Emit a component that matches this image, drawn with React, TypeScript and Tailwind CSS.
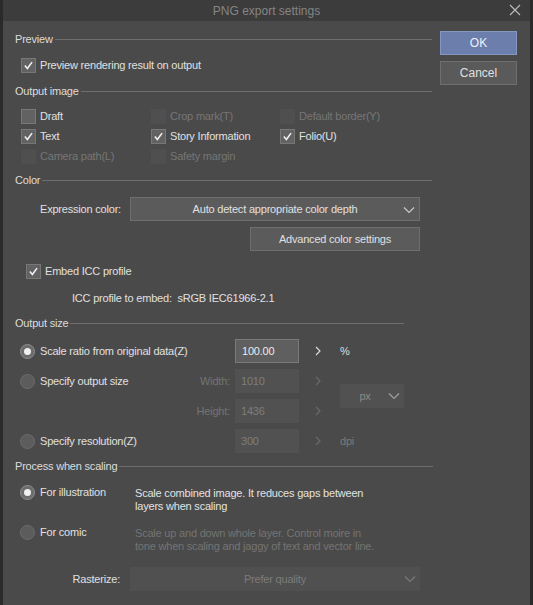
import type { ReactNode } from "react";

const font = { fontFamily: '"Liberation Sans", Arial, sans-serif' };

const Check = () => (
  <svg viewBox="0 0 15 15" className="h-[15px] w-[15px]">
    <path d="M3.3 7.6 L6.2 10.9 L11.6 3.6" fill="none" stroke="#f2f2f2" strokeWidth="1.8" />
  </svg>
);

const Checkbox = ({ checked, disabled, label }: { checked?: boolean; disabled?: boolean; label: string }) => (
  <div className="flex h-[20px] items-center gap-[4px]">
    <div
      className={`h-[15px] w-[15px] shrink-0 ${
        disabled ? "bg-[#4f4f4f]" : "border border-[#777777] bg-[#626262]"
      } flex items-center justify-center`}
    >
      {checked && <Check />}
    </div>
    <span className={disabled ? "text-[#767676]" : "text-[#e0e0e0]"}>{label}</span>
  </div>
);

const Radio = ({ selected, label }: { selected?: boolean; label: string }) => (
  <div className="flex h-[16px] items-center gap-[5px]">
    <div
      className={`flex h-[15px] w-[15px] shrink-0 items-center justify-center rounded-full border ${
        selected ? "border-[#8e8e8e] bg-[#6c6c6c]" : "border-[#6c6c6c] bg-[#5c5c5c]"
      }`}
    >
      {selected && <div className="h-[7px] w-[7px] rounded-full bg-[#f0f0f0]" />}
    </div>
    <span className="text-[#e0e0e0]">{label}</span>
  </div>
);

const Header = ({ label, lineEnd = 432 }: { label: string; lineEnd?: number }) => (
  <div className="flex h-[16px] items-center" style={{ width: lineEnd - 15 }}>
    <span className="text-[#dcdcdc]">{label}</span>
    <div className="ml-[2px] h-px flex-1 bg-[#6e6e6e]" />
  </div>
);

const ChevronDown = ({ color }: { color: string }) => (
  <svg viewBox="0 0 12 8" className="h-[8px] w-[12px]">
    <path d="M1 1.5 L6 6.5 L11 1.5" fill="none" stroke={color} strokeWidth="1.2" />
  </svg>
);

const ChevronRight = ({ dim }: { dim?: boolean }) => (
  <svg viewBox="0 0 6 10" className="h-[10px] w-[6px]">
    <path d="M1 1 L5 5 L1 9" fill="none" stroke={dim ? "#6a6a6a" : "#d8d8d8"} strokeWidth="1.2" />
  </svg>
);

const Field = ({ value, active }: { value: string; active?: boolean }) => (
  <div
    className={`flex h-[24px] w-[64px] items-center pl-[6px] ${
      active ? "border border-[#7a7a7a] bg-[#5f5f5f] text-[#ececec]" : "bg-[#515151] text-[#7e7e7e]"
    }`}
  >
    {value}
  </div>
);

const Select = ({ text, disabled, children }: { text: string; disabled?: boolean; children?: ReactNode }) => (
  <div
    className={`relative flex h-[24px] w-[290px] items-center justify-center ${
      disabled ? "bg-[#505050] text-[#7c7c7c]" : "border border-[#6e6e6e] bg-[#5b5b5b] text-[#e0e0e0]"
    }`}
  >
    <span>{text}</span>
    <div className="absolute right-[4px] top-[8px]">
      <ChevronDown color={disabled ? "#7a7a7a" : "#c8c8c8"} />
    </div>
    {children}
  </div>
);

export default function App() {
  return (
    <div
      className="h-[605px] w-[533px] overflow-hidden whitespace-nowrap bg-[#2a2a2a] pl-[3px] text-[11px] tracking-[-0.2px]"
      style={font}
    >
      <div className="h-full w-[527px] bg-[#4a4a4a]">
        {/* title bar */}
        <div className="relative flex h-[21px] items-center justify-center bg-[#3c3c3c] text-[12px] tracking-normal text-[#858585]">
          PNG export settings
          <svg viewBox="0 0 12 12" className="absolute right-[9px] top-[4px] h-[12px] w-[12px]">
            <path d="M1 1 L11 11 M11 1 L1 11" stroke="#bdbdbd" strokeWidth="1.1" />
          </svg>
        </div>

        <div className="flex">
          {/* main column */}
          <div className="w-[434px] pl-[12px] pt-[10px]">
            <Header label="Preview" />
            <div className="mt-[8px] pl-[6px]">
              <Checkbox checked label="Preview rendering result on output" />
            </div>

            <div className="mt-[8px]">
              <Header label="Output image" />
            </div>
            <div className="mt-[7px] grid grid-cols-[130px_129px_1fr] pl-[6px]">
              <Checkbox label="Draft" />
              <Checkbox disabled label="Crop mark(T)" />
              <Checkbox disabled label="Default border(Y)" />
              <Checkbox checked label="Text" />
              <Checkbox checked label="Story Information" />
              <Checkbox checked label="Folio(U)" />
              <Checkbox disabled label="Camera path(L)" />
              <Checkbox disabled label="Safety margin" />
            </div>

            <div className="mt-[6px]">
              <Header label="Color" />
            </div>
            <div className="mt-[9px] flex items-center gap-[10px] pl-[25px]">
              <span className="w-[80px] text-[#e0e0e0]">Expression color:</span>
              <Select text="Auto detect appropriate color depth" />
            </div>
            <div className="mt-[6px] flex pl-[235px]">
              <div className="flex h-[24px] w-[170px] items-center justify-center border border-[#6e6e6e] bg-[#5b5b5b] text-[#e0e0e0]">
                Advanced color settings
              </div>
            </div>
            <div className="mt-[10px] pl-[11px]">
              <Checkbox checked label="Embed ICC profile" />
            </div>
            <div className="mt-[7px] flex h-[20px] items-center pl-[57px] text-[#e0e0e0]">
              ICC profile to embed:&nbsp; sRGB IEC61966-2.1
            </div>

            <div className="mt-[7px]">
              <Header label="Output size" lineEnd={404} />
            </div>
            <div className="mt-[8px] grid grid-cols-[220px_64px_41px_80px] gap-y-[6px]">
              <div className="flex items-center pl-[5px]">
                <Radio selected label="Scale ratio from original data(Z)" />
              </div>
              <Field value="100.00" active />
              <div className="flex items-center pl-[16px]">
                <ChevronRight />
              </div>
              <div className="flex items-center text-[#dedede]">%</div>

              <div className="flex items-center justify-between pl-[5px] pr-[5px]">
                <Radio label="Specify output size" />
                <span className="text-[#747474]">Width:</span>
              </div>
              <Field value="1010" />
              <div className="flex items-center pl-[16px]">
                <ChevronRight dim />
              </div>
              <div className="row-span-2 flex items-center">
                <div className="relative flex h-[24px] w-[64px] items-center justify-center bg-[#515151] pr-[14px] text-[#8a8a8a]">
                  px
                  <div className="absolute right-[4px] top-[8px]">
                    <ChevronDown color="#a0a0a0" />
                  </div>
                </div>
              </div>

              <div className="flex items-center justify-end pr-[5px] text-[#747474]">Height:</div>
              <Field value="1436" />
              <div className="flex items-center pl-[16px]">
                <ChevronRight dim />
              </div>

              <div className="flex items-center pl-[5px]">
                <Radio label="Specify resolution(Z)" />
              </div>
              <Field value="300" />
              <div className="flex items-center pl-[16px]">
                <ChevronRight dim />
              </div>
              <div className="flex items-center text-[#7a7a7a]">dpi</div>
            </div>

            <div className="mt-[5px]">
              <Header label="Process when scaling" lineEnd={433} />
            </div>
            <div className="mt-[10px] flex items-start pl-[5px]">
              <div className="w-[115px]">
                <Radio selected label="For illustration" />
              </div>
              <div className="mt-[3px] leading-[13px] text-[#e2e2e2]">
                Scale combined image. It reduces gaps between
                <br />
                layers when scaling
              </div>
            </div>
            <div className="mt-[11px] flex items-start pl-[5px]">
              <div className="w-[115px]">
                <Radio label="For comic" />
              </div>
              <div className="mt-[3px] leading-[13px] text-[#747474]">
                Scale up and down whole layer. Control moire in
                <br />
                tone when scaling and jaggy of text and vector line.
              </div>
            </div>
            <div className="mt-[14px] flex items-center gap-[10px]">
              <span className="w-[105px] text-right text-[#e0e0e0]">Rasterize:</span>
              <Select disabled text="Prefer quality" />
            </div>
          </div>

          {/* buttons */}
          <div className="flex flex-col gap-[6px] pl-[3px] pt-[10px]">
            <div className="flex h-[24px] w-[77px] items-center justify-center border border-[#8596c0] bg-[#6b7eac] text-[12px] tracking-normal text-[#eef0f6]">
              OK
            </div>
            <div className="flex h-[24px] w-[77px] items-center justify-center border border-[#6e6e6e] bg-[#5a5a5a] text-[12px] tracking-normal text-[#e0e0e0]">
              Cancel
            </div>
          </div>
        </div>
      </div>
    </div>
  );
}
